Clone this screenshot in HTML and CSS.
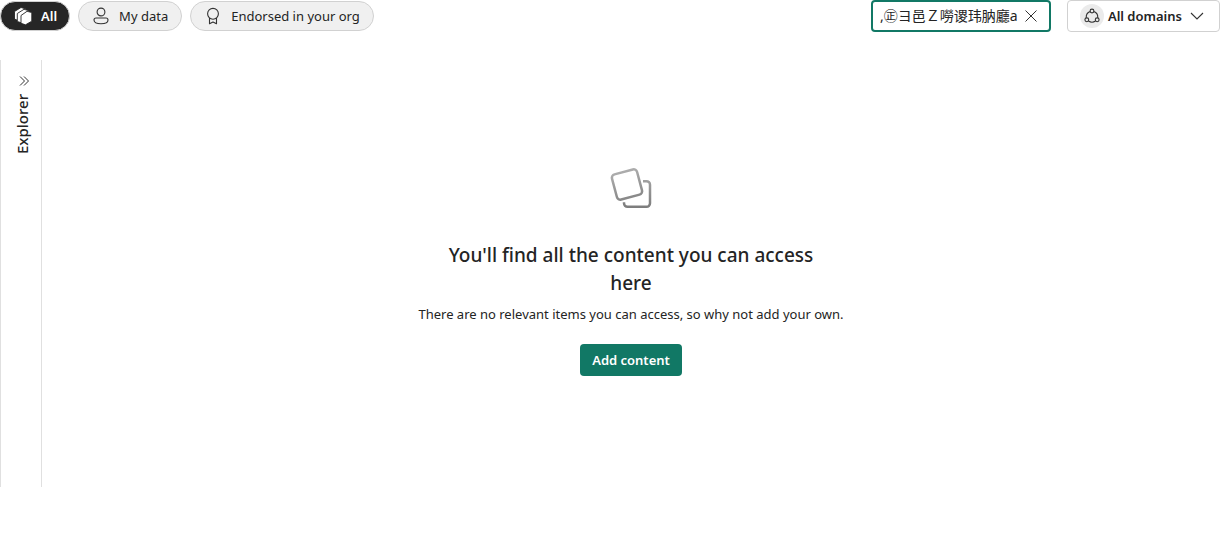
FILE: index.html
```html
<!DOCTYPE html>
<html lang="en">
<head>
<meta charset="utf-8">
<meta name="viewport" content="width=device-width, initial-scale=1">
<title>Data catalog</title>
<link rel="stylesheet" href="styles.css">
</head>
<body>
<header class="toolbar">
  <nav class="filters" aria-label="Filters">
    <button class="pill pill-active" type="button">
      <svg width="20" height="20" viewBox="0 0 20 20" aria-hidden="true"><g fill="#fff" stroke="#262626" stroke-width=".9" stroke-linejoin="round"><path d="M1.500 5.500 8 1.500l5 1.500v10l-7 2-4.500-2z"/><path d="M4.300 7.500 11 3.300l5 1.400v10l-7 2.300-4.700-1.500z"/><path d="M8 9.500 14 5.300l4.800 1.200v8.700l-6.300 3.600L8 17.300z"/></g></svg>
      <span>All</span>
    </button>
    <button class="pill pill-wide" type="button">
      <svg width="20" height="20" viewBox="0 0 20 20" fill="none" stroke="#333" stroke-width="1.1" aria-hidden="true"><circle cx="10" cy="6" r="3.900"/><path d="M5 12h10a2 2 0 0 1 2 2c0 2.200-2.300 3.800-7 3.800S3 16.200 3 14a2 2 0 0 1 2-2z"/></svg>
      <span>My data</span>
    </button>
    <button class="pill pill-wide" type="button">
      <svg width="20" height="20" viewBox="0 0 20 20" fill="none" stroke="#333" stroke-width="1.1" stroke-linejoin="round" aria-hidden="true"><circle cx="10" cy="7.800" r="5.400"/><path d="M6.500 12v5.800l3.500-1.800 3.500 1.800V12"/></svg>
      <span>Endorsed in your org</span>
    </button>
  </nav>
  <div class="tools">
    <div class="search">
      <input class="search-input" type="text" aria-label="Filter by keyword" value=",㊣ヨ邑Ｚ嘮谡玮肭廳a">
      <button class="clear" type="button" aria-label="Clear">
        <svg width="14" height="14" viewBox="0 0 14 14" fill="none" stroke="#333" aria-hidden="true"><path d="m1.500 1.500 11 11m0-11-11 11"/></svg>
      </button>
    </div>
    <button class="domains" type="button">
      <span class="domain-icon">
        <svg width="18" height="18" viewBox="0 0 18 18" fill="none" stroke="#333" stroke-width="1.1" aria-hidden="true"><circle cx="9" cy="4" r="1.900"/><circle cx="3.800" cy="12.800" r="1.900"/><circle cx="14.200" cy="12.800" r="1.900"/><path d="M7.200 4.600a6 6 0 0 0-3.900 6.300M10.800 4.600a6 6 0 0 1 3.900 6.300M5.500 14a6 6 0 0 0 7 0"/></svg>
      </span>
      <span>All domains</span>
      <svg width="14" height="14" viewBox="0 0 14 14" fill="none" stroke="#333" stroke-width="1.1" aria-hidden="true"><path d="m1 4 6 6 6-6"/></svg>
    </button>
  </div>
</header>
<div class="workspace">
  <aside class="explorer">
    <button class="expand" type="button" aria-label="Expand explorer">
      <svg width="12" height="12" viewBox="0 0 12 12" fill="none" stroke="#333" aria-hidden="true"><path d="m2 1.500 4.500 4.500L2 10.500M6 1.500l4.500 4.500L6 10.500"/></svg>
    </button>
    <span class="explorer-label">Explorer</span>
  </aside>
  <main class="empty">
    <svg width="48" height="48" viewBox="0 0 48 48" fill="none" stroke-width="2.500" aria-hidden="true">
      <defs><linearGradient id="edge" x1="0" y1="0" x2="0" y2="48" gradientUnits="userSpaceOnUse"><stop offset="0" stop-color="#b5b5b5"/><stop offset="1" stop-color="#777"/></linearGradient></defs>
      <g stroke="url(#edge)"><rect x="7" y="7.500" width="26" height="26" rx="3.500" transform="rotate(-15 20 20.500)"/><path d="M36 17.200h3.500a3.500 3.500 0 0 1 3.500 3.500v18.600a3.500 3.500 0 0 1-3.500 3.500H20.500a3.500 3.500 0 0 1-3.500-3.500v-1"/></g>
    </svg>
    <h1 class="title">You'll find all the content you can access here</h1>
    <p class="hint">There are no relevant items you can access, so why not add your own.</p>
    <button class="add" type="button">Add content</button>
  </main>
</div>
</body>
</html>
```
FILE: styles.css
```css
* {
  box-sizing: border-box;
}

body {
  margin: 0;
  background: #fff;
  color: #242424;
  font: 13px/20px "Segoe UI", "Noto Sans", "Noto Sans CJK SC", sans-serif;
}

button,
input {
  color: inherit;
  font: inherit;
}

button {
  padding: 0;
  border: 0;
  background: none;
}

svg {
  display: block;
  flex: none;
}

.toolbar {
  display: flex;
  justify-content: space-between;
  padding-right: 12px;
}

.filters {
  display: flex;
  gap: 8px;
  padding-top: 1px;
}

.pill {
  display: flex;
  align-items: center;
  gap: 8px;
  height: 30px;
  padding: 0 12px;
  border: 1px solid #d1d1d1;
  border-radius: 15px;
  background: #f0f0f0;
}

.pill-wide {
  padding-right: 13px;
}

.pill-active {
  background: #262626;
  color: #fff;
  font-weight: 600;
}

.tools {
  display: flex;
  gap: 16px;
}

.search {
  display: flex;
  align-items: center;
  width: 180px;
  height: 32px;
  padding: 0 11px 0 7px;
  border: 2px solid #117865;
  border-radius: 4px;
}

.search-input {
  flex: 1;
  min-width: 0;
  padding: 0;
  border: 0;
  outline: 0;
  background: none;
  font-size: 14px;
}

.clear {
  margin-left: 6px;
}

.domains {
  display: flex;
  align-items: center;
  gap: 4px;
  height: 32px;
  padding: 0 15px 0 12px;
  border: 1px solid #d1d1d1;
  border-radius: 4px;
  font-weight: 600;
}

.domains > :last-child {
  margin-left: 4px;
}

.domain-icon {
  display: grid;
  place-items: center;
  width: 24px;
  height: 24px;
  border-radius: 50%;
  background: #ebebeb;
}

.workspace {
  display: flex;
  height: calc(100vh - 120px);
  min-height: 400px;
  margin-top: 28px;
}

.explorer {
  display: flex;
  flex-direction: column;
  align-items: center;
  gap: 7px;
  width: 42px;
  padding: 15px 0 0 5px;
  border: solid #e0e0e0;
  border-width: 0 1px;
}

.explorer-label {
  padding-left: 4px;
  writing-mode: vertical-rl;
  transform: rotate(180deg);
  font-size: 15px;
  font-weight: 500;
}

.empty {
  display: flex;
  flex: 1;
  flex-direction: column;
  align-items: center;
  padding: 104px 12px 0 0;
  text-align: center;
}

.title {
  max-width: 400px;
  margin: 29px 0 7px;
  font-size: 19px;
  line-height: 28px;
  font-weight: 500;
}

.hint {
  margin: 0 0 20px;
}

.add {
  height: 32px;
  padding: 0 12px;
  border-radius: 4px;
  background: #117865;
  color: #fff;
  font-weight: 600;
}
```
